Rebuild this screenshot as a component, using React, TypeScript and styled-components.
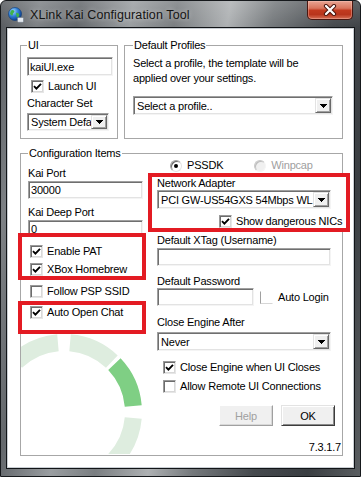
import React from 'react'
import styled, { createGlobalStyle } from 'styled-components'

const GlobalStyle = createGlobalStyle`
  html, body {
    margin: 0;
    padding: 0;
    background: #ffffff;
  }
  body {
    font-family: 'Liberation Sans', Arial, sans-serif;
    font-size: 11px;
    letter-spacing: -0.2px;
    color: #000000;
  }
  * {
    box-sizing: border-box;
  }
`

const Window = styled.div`
  width: 361px;
  height: 477px;
  display: flex;
  flex-direction: column;
  border: 1px solid #16191c;
  border-radius: 6px 6px 0 0;
  overflow: hidden;
  background: linear-gradient(180deg, rgba(255, 255, 255, 0.16) 0px, rgba(255, 255, 255, 0) 26px),
    linear-gradient(
      100deg,
      #55595d 0%,
      #7d8185 9%,
      #64686c 18%,
      #9a9ea1 30%,
      #7a7e81 40%,
      #aeb1b3 52%,
      #75797c 62%,
      #45494d 76%,
      #3a3e42 88%,
      #5a5e61 100%
    );
`

const TitleBar = styled.div`
  height: 27px;
  flex-shrink: 0;
  display: flex;
  align-items: center;
  padding-left: 7px;
`

const TitleText = styled.span`
  margin-left: 6px;
  font-size: 12.5px;
  letter-spacing: 0.1px;
  color: #141414;
  text-shadow: 0 0 5px rgba(255, 255, 255, 0.55);
`

const CloseButton = styled.div`
  margin-left: auto;
  margin-right: 7px;
  align-self: flex-start;
  width: 46px;
  height: 19px;
  display: flex;
  align-items: center;
  justify-content: center;
  border: 1px solid #4a1710;
  border-top: none;
  border-radius: 0 0 5px 5px;
  background: linear-gradient(180deg, #e9a493 0%, #d9755d 40%, #c23a1f 52%, #b8351c 75%, #d66f55 100%);
  box-shadow: inset 0 0 0 1px rgba(255, 210, 200, 0.35);
`

const Client = styled.div`
  flex: 1;
  margin: 0 6px 8px;
  display: flex;
  flex-direction: column;
  padding: 10px 10px 0 12px;
  background: #ffffff;
  border: 1px solid #c9ced3;
  box-shadow: 0 0 0 1px #111417;
`

const TopRow = styled.div`
  display: flex;
  gap: 6px;
`

const GroupBox = styled.fieldset<{ $width?: number; $height: number; $padLeft?: number; $mt?: number }>`
  position: relative;
  margin: ${(p) => p.$mt ?? 0}px 0 0;
  padding: 0 0 0 ${(p) => p.$padLeft ?? 6}px;
  width: ${(p) => (p.$width ? `${p.$width}px` : 'auto')};
  height: ${(p) => p.$height}px;
  min-width: 0;
  border: 1px solid #a7a7a7;
`

const GroupTitle = styled.legend`
  margin: 0;
  padding: 0 1px;
  line-height: 13px;
`

const Stack = styled.div`
  display: flex;
  flex-direction: column;
  align-items: flex-start;
`

const Text = styled.div<{ $mt?: number; $align?: string }>`
  margin-top: ${(p) => p.$mt ?? 0}px;
  line-height: 13px;
  white-space: nowrap;
  align-self: ${(p) => (p.$align === 'right' ? 'stretch' : 'auto')};
  text-align: ${(p) => p.$align ?? 'left'};
`

const Paragraph = styled.p`
  margin: 4px 0 0;
  line-height: 15px;
  white-space: nowrap;
`

const Edit = styled.input<{ $w: number; $h?: number; $mt?: number }>`
  width: ${(p) => p.$w}px;
  height: ${(p) => p.$h ?? 18}px;
  margin: ${(p) => p.$mt ?? 0}px 0 0;
  padding: 0 2px;
  font: inherit;
  letter-spacing: inherit;
  color: #000000;
  background: #ffffff;
  border: 1px solid;
  border-color: #a0a0a0 #f4f4f4 #f4f4f4 #a0a0a0;
  box-shadow: inset 1px 1px 0 #6f6f6f, inset -1px -1px 0 #e3e3e3;
  outline: none;
`

const Combo = styled.div<{ $w: number; $h?: number; $mt?: number }>`
  width: ${(p) => p.$w}px;
  height: ${(p) => p.$h ?? 19}px;
  margin-top: ${(p) => p.$mt ?? 0}px;
  display: flex;
  padding: 1px;
  background: #ffffff;
  border: 1px solid;
  border-color: #a0a0a0 #f4f4f4 #f4f4f4 #a0a0a0;
  box-shadow: inset 1px 1px 0 #6f6f6f, inset -1px -1px 0 #e3e3e3;
`

const ComboText = styled.span`
  flex: 1;
  min-width: 0;
  padding-left: 2px;
  white-space: nowrap;
  display: flex;
  align-items: center;
`

const ComboButton = styled.span`
  width: 16px;
  flex-shrink: 0;
  display: flex;
  align-items: center;
  justify-content: center;
  background: #f0f0f0;
  border: 1px solid;
  border-color: #e3e3e3 #696969 #696969 #e3e3e3;
  box-shadow: inset 1px 1px 0 #ffffff, inset -1px -1px 0 #a0a0a0;
`

const CheckRow = styled.div<{ $mt?: number; $indent?: number; $gap?: number }>`
  display: flex;
  align-items: center;
  gap: ${(p) => p.$gap ?? 4}px;
  height: 13px;
  margin-top: ${(p) => p.$mt ?? 0}px;
  padding-left: ${(p) => p.$indent ?? 0}px;
  line-height: 13px;
  white-space: nowrap;
`

const Box = styled.span<{ $faint?: boolean }>`
  width: 13px;
  height: 13px;
  flex-shrink: 0;
  display: inline-flex;
  align-items: center;
  justify-content: center;
  background: #ffffff;
  border: 1px solid;
  border-color: ${(p) =>
    p.$faint ? 'transparent transparent #d6d6d6 #a0a0a0' : '#9a9a9a #e6e6e6 #e6e6e6 #9a9a9a'};
  box-shadow: ${(p) => (p.$faint ? 'none' : 'inset 1px 1px 0 #6c6c6c, inset -1px -1px 0 #d8d8d8')};
`

const RadioGroup = styled.div`
  display: flex;
  gap: 31px;
  margin-top: -1px;
  padding-left: 13px;
`

const RadioItem = styled.div<{ $disabled?: boolean }>`
  display: flex;
  align-items: center;
  gap: 5px;
  height: 13px;
  line-height: 13px;
  color: ${(p) => (p.$disabled ? '#a0a0a0' : '#000000')};
`

const RadioDot = styled.span<{ $on?: boolean; $disabled?: boolean }>`
  width: 12px;
  height: 12px;
  border-radius: 50%;
  display: inline-flex;
  align-items: center;
  justify-content: center;
  background: ${(p) => (p.$disabled ? '#f0f0f0' : '#ffffff')};
  border: 1px solid;
  border-color: ${(p) => (p.$disabled ? '#c8c8c8 #f4f4f4 #f4f4f4 #c8c8c8' : '#a0a0a0 #e3e3e3 #e3e3e3 #a0a0a0')};
  box-shadow: inset 1px 1px 0 ${(p) => (p.$disabled ? '#bdbdbd' : '#696969')};

  &::after {
    content: '';
    display: ${(p) => (p.$on ? 'block' : 'none')};
    width: 4px;
    height: 4px;
    border-radius: 50%;
    background: #000000;
  }
`

const Highlight = styled.div<{ $w: number; $h: number; $mt: number; $ml: number; $pad: string }>`
  position: relative;
  width: ${(p) => p.$w}px;
  height: ${(p) => p.$h}px;
  margin-top: ${(p) => p.$mt}px;
  margin-left: ${(p) => p.$ml}px;
  padding: ${(p) => p.$pad};
  display: flex;
  flex-direction: column;
  align-items: flex-start;
  background: #ffffff;
  border: 4px solid #e31b23;
`

const ConfigBody = styled.div`
  display: grid;
  grid-template-columns: 116px 184px;
  column-gap: 13px;
  align-items: start;
`

const InlineRow = styled.div`
  display: flex;
  align-items: center;
`

const ButtonRow = styled.div`
  align-self: stretch;
  display: flex;
  justify-content: flex-end;
  gap: 8px;
  margin-top: 12px;
  padding-right: 6px;
`

const PushButton = styled.button<{ $default?: boolean }>`
  width: 54px;
  height: 21px;
  padding: 0;
  font: inherit;
  letter-spacing: inherit;
  color: ${(p) => (p.disabled ? '#a0a0a0' : '#000000')};
  background: #f0f0f0;
  border: 1px solid;
  border-color: ${(p) => (p.$default ? '#e3e3e3 #3c3c3c #3c3c3c #e3e3e3' : '#ffffff #a0a0a0 #a0a0a0 #ffffff')};
  box-shadow: ${(p) =>
    p.$default ? 'inset 1px 1px 0 #ffffff, inset -1px -1px 0 #8a8a8a' : 'inset -1px -1px 0 #d8d8d8'};
`

const RingClip = styled.div`
  position: absolute;
  left: 0;
  bottom: 0;
  width: 125px;
  height: 120px;
  overflow: hidden;
  pointer-events: none;
`

const RING = { cx: 43, cy: 78, r: 69.5 }

const ringPoint = (deg: number) => {
  const t = (deg * Math.PI) / 180
  return `${(RING.cx + RING.r * Math.cos(t)).toFixed(2)} ${(RING.cy - RING.r * Math.sin(t)).toFixed(2)}`
}

const gapAt = (deg: number) => (deg % 90 === 0 ? 5 : 1.5)

const ringSegments = Array.from({ length: 8 }, (_, k) => {
  const start = 45 * k + gapAt(45 * k)
  const end = 45 * (k + 1) - gapAt(45 * (k + 1))
  return { d: `M ${ringPoint(start)} A ${RING.r} ${RING.r} 0 0 0 ${ringPoint(end)}`, active: k === 0 }
})

const Ring = () => (
  <RingClip>
    <svg width="125" height="120" viewBox="0 0 125 120">
      {ringSegments.map((s, i) => (
        <path key={i} d={s.d} fill="none" stroke={s.active ? '#7fcf84' : '#deeddf'} strokeWidth="17" />
      ))}
    </svg>
  </RingClip>
)

const Tick = () => (
  <svg width="9" height="9" viewBox="0 0 9 9">
    <path d="M1 4.2 L3.4 6.6 L8 1.8" fill="none" stroke="#000000" strokeWidth="1.9" />
  </svg>
)

const Arrow = () => (
  <svg width="7" height="4" viewBox="0 0 7 4" shapeRendering="crispEdges">
    <polygon points="0,0 7,0 3.5,4" fill="#000000" />
  </svg>
)

const Globe = () => (
  <svg width="16" height="16" viewBox="0 0 16 16">
    <defs>
      <radialGradient id="globe" cx="35%" cy="30%" r="75%">
        <stop offset="0" stopColor="#a8dcff" />
        <stop offset="0.5" stopColor="#2f7fd6" />
        <stop offset="1" stopColor="#0a3a85" />
      </radialGradient>
    </defs>
    <circle cx="7" cy="7" r="6.5" fill="url(#globe)" stroke="#0b3a7a" strokeWidth="0.6" />
    <path d="M3 3.5 C4.5 2.3 6 3 6.5 4.5 C6 6 4.5 6 4.8 8 C4 9 2.5 8 2 6.5 Z" fill="#3fb24a" />
    <path d="M8 5.8 C9.5 5.3 11.6 6.4 11.2 8.4 C10.6 10.4 9 11 8.5 9.5 Z" fill="#3fb24a" />
    <rect x="9.5" y="10.5" width="6" height="4.8" rx="0.8" fill="#e2e8ee" stroke="#6f7b88" strokeWidth="0.6" />
  </svg>
)

const CloseGlyph = () => (
  <svg width="14" height="12" viewBox="0 0 14 12">
    <path d="M3 2 L11 10 M11 2 L3 10" stroke="#4a140c" strokeWidth="4.2" strokeLinecap="round" />
    <path d="M3 2 L11 10 M11 2 L3 10" stroke="#ffffff" strokeWidth="2.3" strokeLinecap="round" />
  </svg>
)

const Check = ({ label, checked, mt, indent }: { label: string; checked?: boolean; mt?: number; indent?: number }) => (
  <CheckRow $mt={mt} $indent={indent}>
    <Box>{checked && <Tick />}</Box>
    <span>{label}</span>
  </CheckRow>
)

// combo text is what the narrow box shows, the rest is hidden behind the button
const Select = ({ value, w, h, mt }: { value: string; w: number; h?: number; mt?: number }) => (
  <Combo $w={w} $h={h} $mt={mt}>
    <ComboText>{value}</ComboText>
    <ComboButton>
      <Arrow />
    </ComboButton>
  </Combo>
)

const App: React.FC = () => {
  return (
    <>
      <GlobalStyle />
      <Window>
        <TitleBar>
          <Globe />
          <TitleText>XLink Kai Configuration Tool</TitleText>
          <CloseButton>
            <CloseGlyph />
          </CloseButton>
        </TitleBar>
        <Client>
          <TopRow>
            <GroupBox $width={98} $height={100}>
              <GroupTitle>UI</GroupTitle>
              <Stack>
                <Edit $w={86} $h={19} $mt={5} readOnly value="kaiUI.exe" />
                <Check label="Launch UI" checked mt={4} indent={4} />
                <Text $mt={4}>Character Set</Text>
                <Select value="System Defa" w={82} h={18} mt={3} />
              </Stack>
            </GroupBox>
            <GroupBox $width={219} $height={100} $padLeft={8}>
              <GroupTitle>Default Profiles</GroupTitle>
              <Stack>
                <Paragraph>
                  Select a profile, the template will be
                  <br />
                  applied over your settings.
                </Paragraph>
                <Select value="Select a profile.." w={200} mt={10} />
              </Stack>
            </GroupBox>
          </TopRow>
          <GroupBox $height={309} $padLeft={7} $mt={8}>
            <GroupTitle>Configuration Items</GroupTitle>
            <Ring />
            <ConfigBody>
              <Stack>
                <Text $mt={7}>Kai Port</Text>
                <Edit $w={115} $mt={1} readOnly value="30000" />
                <Text $mt={7}>Kai Deep Port</Text>
                <Edit $w={115} $mt={1} readOnly value="0" />
                <Highlight $w={128} $h={47} $mt={-5} $ml={-10} $pad="8px 0 0 8px">
                  <Check label="Enable PAT" checked />
                  <Check label="XBox Homebrew" checked mt={5} />
                </Highlight>
                <Check label="Follow PSP SSID" mt={5} indent={2} />
                <Highlight $w={128} $h={33} $mt={3} $ml={-10} $pad="1px 0 0 8px">
                  <Check label="Auto Open Chat" checked />
                </Highlight>
              </Stack>
              <Stack>
                <RadioGroup>
                  <RadioItem>
                    <RadioDot $on />
                    PSSDK
                  </RadioItem>
                  <RadioItem $disabled>
                    <RadioDot $disabled />
                    Winpcap
                  </RadioItem>
                </RadioGroup>
                <Highlight $w={202} $h={59} $mt={1} $ml={-9} $pad="0 0 0 5px">
                  <Text>Network Adapter</Text>
                  <Select value="PCI GW-US54GXS 54Mbps WL" w={174} h={20} />
                  <Check label="Show dangerous NICs" checked mt={6} indent={62} />
                </Highlight>
                <Text $mt={2}>Default XTag (Username)</Text>
                <Edit $w={174} $mt={1} readOnly value="" />
                <Text $mt={9}>Default Password</Text>
                <InlineRow>
                  <Edit $w={97} type="password" readOnly value="" />
                  <CheckRow $indent={6} $gap={5}>
                    <Box $faint />
                    <span>Auto Login</span>
                  </CheckRow>
                </InlineRow>
                <Text $mt={10}>Close Engine After</Text>
                <Select value="Never" w={174} mt={3} />
                <Check label="Close Engine when UI Closes" checked mt={10} indent={6} />
                <Check label="Allow Remote UI Connections" mt={6} indent={6} />
                <ButtonRow>
                  <PushButton disabled>Help</PushButton>
                  <PushButton $default>OK</PushButton>
                </ButtonRow>
                <Text $mt={15} $align="right">
                  7.3.1.7
                </Text>
              </Stack>
            </ConfigBody>
          </GroupBox>
        </Client>
      </Window>
    </>
  )
}

export default App
